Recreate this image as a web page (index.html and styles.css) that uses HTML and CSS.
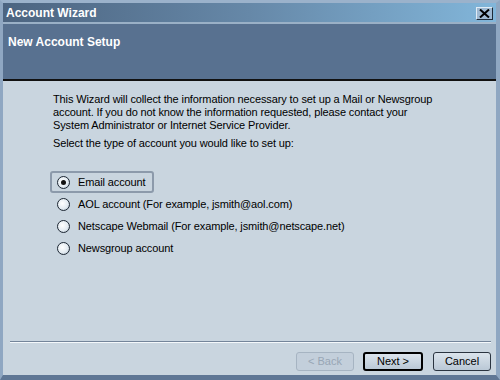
FILE: index.html
```html
<!DOCTYPE html>
<html>
<head>
<meta charset="utf-8">
<link rel="stylesheet" href="styles.css">
</head>
<body>
<div class="window">
  <div class="titlebar">
    <span class="title">Account Wizard</span>
    <span class="close"><svg width="11" height="9" viewBox="0 0 11 9"><path d="M1 0.5 L10 8.5 M10 0.5 L1 8.5" stroke="#000" stroke-width="2"/></svg></span>
  </div>
  <div class="header">New Account Setup</div>
  <div class="content">
    <p class="intro">This Wizard will collect the information necessary to set up a Mail or Newsgroup<br>account. If you do not know the information requested, please contact your<br>System Administrator or Internet Service Provider.</p>
    <p class="select">Select the type of account you would like to set up:</p>
    <div class="options">
      <div class="option focus"><span class="radio checked"></span>Email account</div>
      <div class="option"><span class="radio"></span>AOL account (For example, jsmith@aol.com)</div>
      <div class="option"><span class="radio"></span>Netscape Webmail (For example, jsmith@netscape.net)</div>
      <div class="option"><span class="radio"></span>Newsgroup account</div>
    </div>
  </div>
  <div class="sep"></div>
  <div class="buttons">
    <button class="btn disabled">&lt; Back</button>
    <button class="btn default">Next &gt;</button>
    <button class="btn">Cancel</button>
  </div>
</div>
</body>
</html>
```

FILE: styles.css
```css
html, body {
  margin: 0;
  padding: 0;
  width: 500px;
  height: 380px;
  overflow: hidden;
  background: #c9d5df;
}
.window {
  box-sizing: border-box;
  width: 500px;
  height: 380px;
  display: flex;
  flex-direction: column;
  border-left: 3px solid #8fa7c2;
  border-top: 3px solid #9bb2cb;
  border-right: 4px solid #8fa7c2;
  border-bottom: 5px solid #5f7795;
  background: #c9d5df;
  font-family: "Liberation Sans", Arial, sans-serif;
  font-size: 11px;
  color: #000;
}
.titlebar {
  height: 19px;
  display: flex;
  align-items: center;
  justify-content: space-between;
  padding: 0 3px 0 3px;
  background: linear-gradient(to right, #4c6480 0%, #6688a8 50%, #82b6da 100%);
  border-bottom: 2px solid #9ab0c6;
}
.title {
  font-weight: bold;
  font-size: 12px;
  color: #fff;
}
.close {
  width: 17px;
  height: 13px;
  box-sizing: border-box;
  border: 1px solid #1e2a36;
  border-top-color: #e0ecf6;
  border-left-color: #e0ecf6;
  background: #9fb9d2;
  display: flex;
  align-items: center;
  justify-content: center;
  margin-top: 1px;
}
.header {
  height: 57px;
  box-sizing: border-box;
  background: #587190;
  color: #fff;
  font-weight: bold;
  font-size: 12px;
  padding: 11px 0 0 5px;
  border-bottom: 2px solid #111;
}
.content {
  flex: 1;
  padding: 12px 20px 0 50px;
  font-size: 11px;
  letter-spacing: -0.12px;
}
.content p {
  margin: 0;
  line-height: 13px;
  white-space: nowrap;
}
.select {
  margin-top: 5px !important;
}
.options {
  margin-top: 21px;
  display: flex;
  flex-direction: column;
}
.option {
  height: 22px;
  box-sizing: border-box;
  display: flex;
  align-items: center;
  padding-left: 5px;
  border: 2px solid transparent;
  border-radius: 3px;
  margin-left: -3px;
  width: max-content;
  padding-right: 6px;
}
.option.focus {
  border-color: #8c9aab;
}
.radio {
  width: 13px;
  height: 13px;
  box-sizing: border-box;
  border-radius: 50%;
  border: 1px solid #1d2733;
  background: radial-gradient(circle at 40% 40%, #ffffff 0%, #e4ecf2 55%, #a9b8c6 100%);
  margin-right: 8px;
  position: relative;
  flex: none;
}
.radio.checked::after {
  content: "";
  position: absolute;
  left: 3px;
  top: 3px;
  width: 5px;
  height: 5px;
  border-radius: 50%;
  background: #111;
}
.sep {
  margin: 0 5px 0 7px;
  height: 1px;
  background: #74859a;
  border-bottom: 1px solid #f4f8fb;
}
.buttons {
  height: 32px;
  display: flex;
  justify-content: flex-end;
  align-items: center;
  gap: 9px;
  padding: 4px 5px 0 0;
  box-sizing: border-box;
}
.btn {
  font-family: "Liberation Sans", Arial, sans-serif;
  font-size: 11px;
  height: 19px;
  width: 58px;
  padding: 0;
  box-sizing: border-box;
  border: 1px solid #2a3440;
  border-radius: 3px;
  background: linear-gradient(#dbe4ec, #bac8d6);
  color: #000;
}
.btn.default {
  border: 2px solid #000;
  width: 60px;
  margin-right: 1px;
}
.btn.disabled {
  color: #98a6b5;
  border-color: #a6b4c2;
  background: #c3cfdb;
}
```
